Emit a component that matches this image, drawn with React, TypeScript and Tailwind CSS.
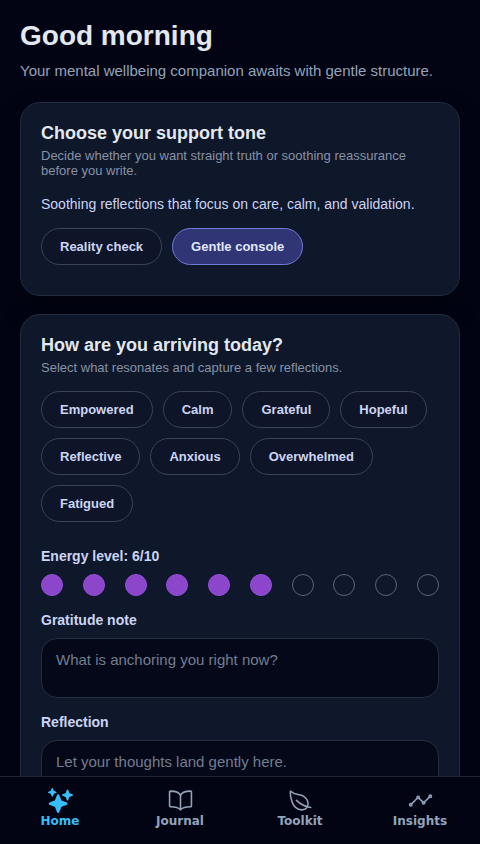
import { useState } from "react";
import type { ReactNode } from "react";
import clsx from "clsx";
import {
  IoAnalyticsOutline,
  IoBookOutline,
  IoLeafOutline,
  IoSparkles,
} from "react-icons/io5";

const TONES = [
  {
    id: "reality",
    label: "Reality check",
    description: "Direct reflections that name what is true and what comes next.",
  },
  {
    id: "gentle",
    label: "Gentle console",
    description:
      "Soothing reflections that focus on care, calm, and validation.",
  },
];

const MOODS = [
  "Empowered",
  "Calm",
  "Grateful",
  "Hopeful",
  "Reflective",
  "Anxious",
  "Overwhelmed",
  "Fatigued",
];

const TABS = [
  { label: "Home", Icon: IoSparkles },
  { label: "Journal", Icon: IoBookOutline },
  { label: "Toolkit", Icon: IoLeafOutline },
  { label: "Insights", Icon: IoAnalyticsOutline },
];

function Card({
  title,
  subtitle,
  children,
}: {
  title: string;
  subtitle: string;
  children: ReactNode;
}) {
  return (
    <section className="rounded-[20px] border border-[#232c3c] bg-[#0f172a] p-5 shadow-[0_12px_24px_rgba(0,0,0,0.35)]">
      <h2 className="text-lg leading-5 font-bold text-[#e2e8f0]">{title}</h2>
      <p className="mt-[5px] mb-4 text-[13px] leading-[15px] text-[#8792a5]">
        {subtitle}
      </p>
      {children}
    </section>
  );
}

function Chip({
  label,
  active,
  onClick,
}: {
  label: string;
  active: boolean;
  onClick: () => void;
}) {
  return (
    <button
      type="button"
      aria-pressed={active}
      onClick={onClick}
      className={clsx(
        "rounded-full border px-[18px] py-2.5 text-[13px] leading-[15px] font-semibold",
        active
          ? "border-[#7379d6] bg-[#303575] text-[#e0e7ff]"
          : "border-[#3a4457] bg-[#0f1528] text-[#cbd5f5]"
      )}
    >
      {label}
    </button>
  );
}

function NoteField({
  id,
  label,
  placeholder,
  tall,
}: {
  id: string;
  label: string;
  placeholder: string;
  tall?: boolean;
}) {
  return (
    <div className="mt-4">
      <label
        htmlFor={id}
        className="block text-sm leading-4 font-semibold text-[#cbd5f5]"
      >
        {label}
      </label>
      <textarea
        id={id}
        placeholder={placeholder}
        className={clsx(
          "mt-2.5 block w-full resize-none rounded-2xl border border-[#252e3e] bg-[#040819] px-3.5 py-3 text-[15px] leading-[18px] text-[#e2e8f0] placeholder:text-[#737d8f]",
          tall ? "h-[120px]" : "h-[60px]"
        )}
      />
    </div>
  );
}

export default function App() {
  const [tone, setTone] = useState("gentle");
  const [moods, setMoods] = useState<string[]>([]);
  const [energy, setEnergy] = useState(6);
  const [tab, setTab] = useState("Home");

  const toggleMood = (mood: string) => {
    setMoods((prev) =>
      prev.includes(mood) ? prev.filter((m) => m !== mood) : [...prev, mood]
    );
  };

  return (
    <div className="flex h-screen flex-col bg-[#020414] font-['Liberation_Sans',Arial,sans-serif]">
      <main className="min-h-0 flex-1 overflow-y-auto p-5 [scrollbar-width:none]">
        <header className="mb-[22px]">
          <h1 className="text-[28px] leading-8 font-bold text-[#e2e8f0]">
            Good morning
          </h1>
          <p className="mt-2.5 text-[15px] leading-[18px] text-[#94a3b8]">
            Your mental wellbeing companion awaits with gentle structure.
          </p>
        </header>

        <div className="flex flex-col gap-[18px]">
          <Card
            title="Choose your support tone"
            subtitle="Decide whether you want straight truth or soothing reassurance before you write."
          >
            <p className="mt-[18px] text-sm leading-4 text-[#cbd5f5]">
              {TONES.find((t) => t.id === tone)?.description}
            </p>
            <div className="mt-4 mb-2.5 flex flex-wrap gap-2.5">
              {TONES.map((t) => (
                <Chip
                  key={t.id}
                  label={t.label}
                  active={t.id === tone}
                  onClick={() => setTone(t.id)}
                />
              ))}
            </div>
          </Card>

          <Card
            title="How are you arriving today?"
            subtitle="Select what resonates and capture a few reflections."
          >
            <div className="flex flex-wrap gap-2.5">
              {MOODS.map((mood) => (
                <Chip
                  key={mood}
                  label={mood}
                  active={moods.includes(mood)}
                  onClick={() => toggleMood(mood)}
                />
              ))}
            </div>

            <p className="mt-[26px] text-sm leading-4 font-semibold text-[#cbd5f5]">
              Energy level: {energy}/10
            </p>
            <div className="mt-2.5 flex justify-between">
              {Array.from({ length: 10 }, (_, i) => (
                <button
                  key={i}
                  type="button"
                  aria-label={`Energy ${i + 1}`}
                  onClick={() => setEnergy(i + 1)}
                  className={clsx(
                    "size-[22px] rounded-full border",
                    i < energy
                      ? "border-[#9650dc] bg-[#8b46cc]"
                      : "border-[#5b6577]"
                  )}
                />
              ))}
            </div>

            <NoteField
              id="gratitude"
              label="Gratitude note"
              placeholder="What is anchoring you right now?"
            />
            <NoteField
              id="reflection"
              label="Reflection"
              placeholder="Let your thoughts land gently here."
              tall
            />
          </Card>
        </div>
      </main>

      {/* Bottom tabs */}
      <nav className="flex border-t border-[#1f2636] bg-[#020414] pt-[11px] pb-[15px] font-['DejaVu_Sans',sans-serif]">
        {TABS.map(({ label, Icon }) => (
          <button
            key={label}
            type="button"
            onClick={() => setTab(label)}
            className={clsx(
              "flex flex-1 flex-col items-center text-xs leading-4 font-semibold",
              tab === label ? "text-[#38bdf8]" : "text-[#94a3b8]"
            )}
          >
            <Icon size={25} aria-hidden="true" />
            {label}
          </button>
        ))}
      </nav>
    </div>
  );
}
